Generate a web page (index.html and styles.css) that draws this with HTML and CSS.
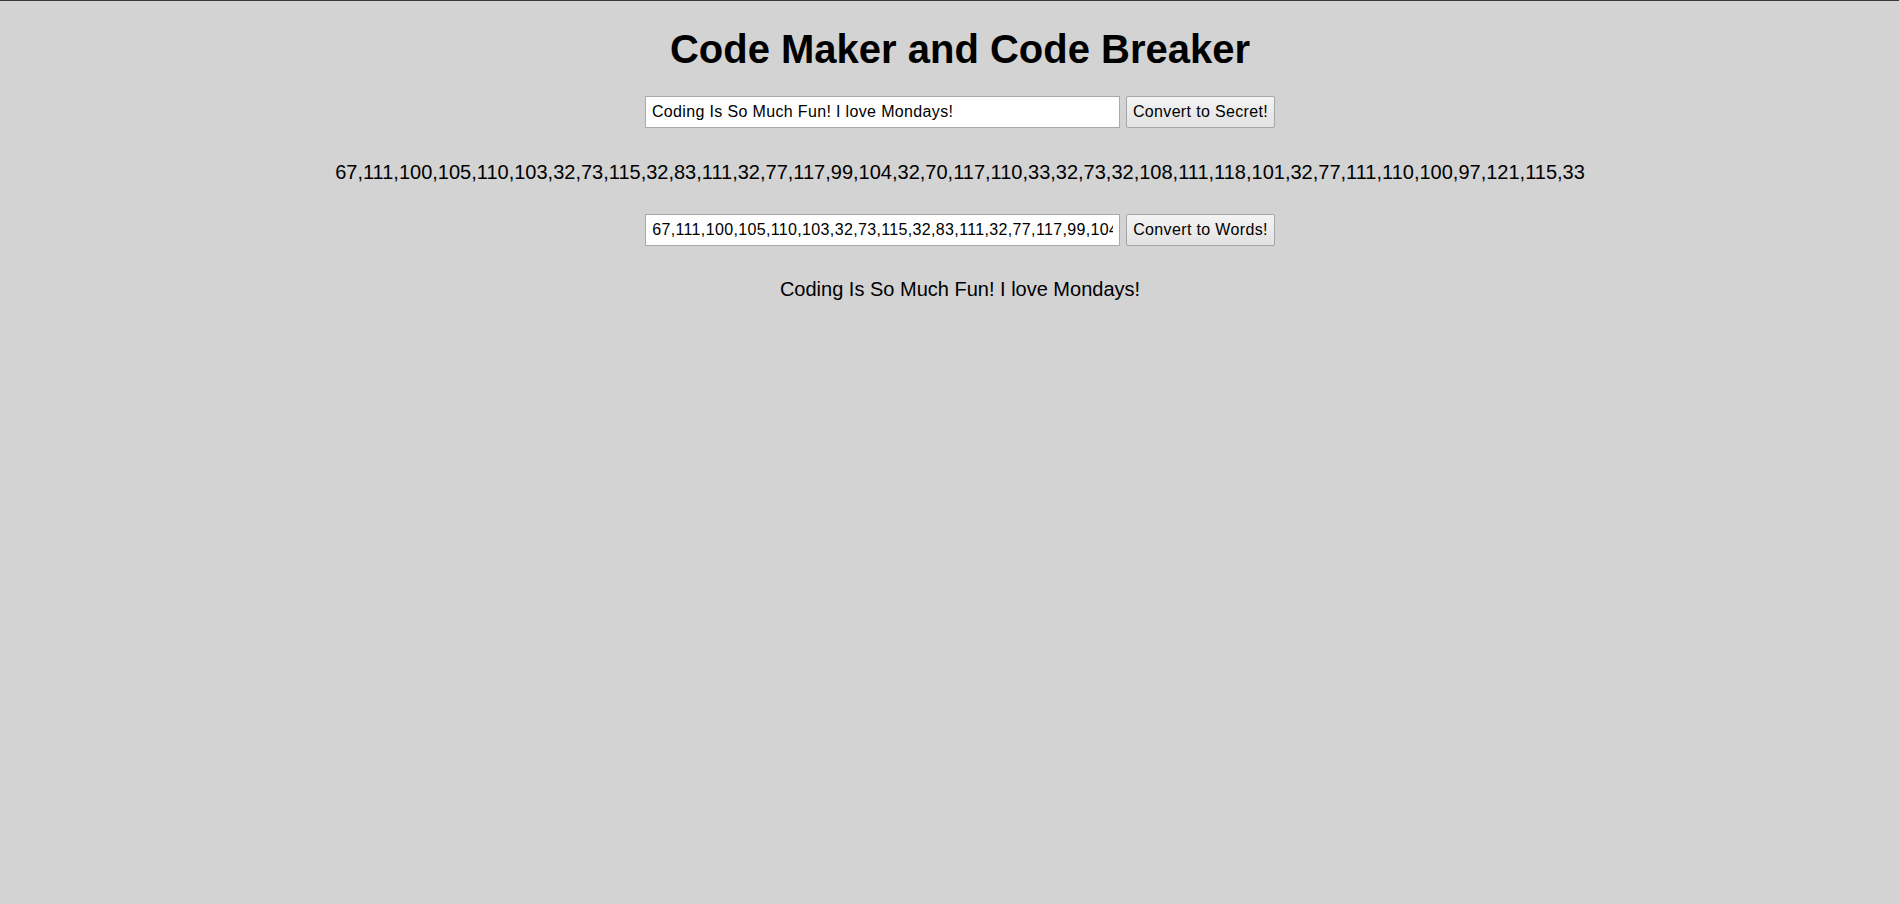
FILE: index.html
```html
<!DOCTYPE html>
<html lang="en">
<head>
<meta charset="utf-8">
<title>Code Maker and Code Breaker</title>
<link rel="stylesheet" href="styles.css">
</head>
<body>
<div class="page">
  <h1 class="title">Code Maker and Code Breaker</h1>
  <div class="row row-first">
    <input class="field" type="text" value="Coding Is So Much Fun! I love Mondays!">
    <button class="btn" type="button">Convert to Secret!</button>
  </div>
  <p class="output output-code">67,111,100,105,110,103,32,73,115,32,83,111,32,77,117,99,104,32,70,117,110,33,32,73,32,108,111,118,101,32,77,111,110,100,97,121,115,33</p>
  <div class="row row-second">
    <input class="field" type="text" value="67,111,100,105,110,103,32,73,115,32,83,111,32,77,117,99,104,32,70,117,110,33,32,73,32,108,111,118,101,32,77,111,110,100,97,121,115,33">
    <button class="btn" type="button">Convert to Words!</button>
  </div>
  <p class="output output-words">Coding Is So Much Fun! I love Mondays!</p>
</div>
</body>
</html>
```

FILE: styles.css
```css
html, body {
  margin: 0;
  padding: 0;
  background: #d3d3d3;
}

body {
  border-top: 1px solid #3a3a3a;
  font-family: "Liberation Sans", Arial, sans-serif;
  color: #000;
}

.page {
  padding-left: 21px;
  text-align: center;
}

.title {
  margin: 25px 0 0;
  font-size: 40px;
  line-height: 46px;
  font-weight: bold;
}

.row {
  display: flex;
  justify-content: center;
  align-items: stretch;
  gap: 6px;
  height: 32px;
}

.row-first {
  margin-top: 24px;
}

.row-second {
  margin-top: 30px;
}

.field {
  box-sizing: border-box;
  width: 475px;
  height: 32px;
  margin: 0;
  padding: 0 6px;
  border: 1px solid #a9a9a9;
  border-radius: 0;
  background: #fff;
  font-family: "Liberation Sans", Arial, sans-serif;
  font-size: 16px;
  letter-spacing: 0.35px;
  color: #000;
  outline: none;
}

.btn {
  box-sizing: border-box;
  height: 32px;
  margin: 0;
  padding: 0 6px;
  border: 1px solid #a6a6a6;
  border-radius: 2px;
  background: linear-gradient(#f4f4f4, #e2e2e2);
  font-family: "Liberation Sans", Arial, sans-serif;
  font-size: 16px;
  letter-spacing: 0.35px;
  color: #000;
}

.output {
  margin: 33px 0 0;
  font-size: 20px;
  line-height: 23px;
}

.output-words {
  margin-top: 32px;
}
```
